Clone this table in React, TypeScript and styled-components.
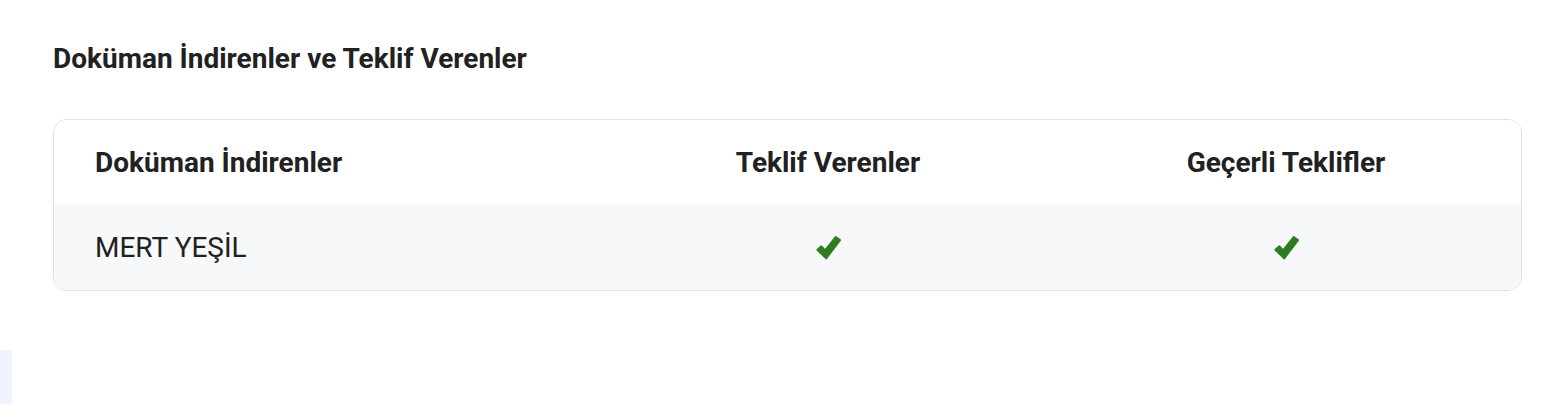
import React from "react";
import styled, { createGlobalStyle } from "styled-components";

const GlobalStyle = createGlobalStyle`
  html, body { margin: 0; padding: 0; background: #ffffff; }
  body { font-family: Roboto, "Noto Sans", Arial, sans-serif; color: #212121; }
`;

const Page = styled.div`
  position: relative;
  width: 1542px;
  height: 404px;
  box-sizing: border-box;
  padding: 41px 20px 0 53px;
`;

const Title = styled.h2`
  margin: 0;
  font-size: 28px;
  font-weight: 700;
  line-height: 36px;
  color: #212121;
`;

const Card = styled.div`
  margin-top: 42px;
  width: 1469px;
  box-sizing: border-box;
  border: 1px solid #dedfe1;
  border-radius: 14px;
  overflow: hidden;
`;

const Row = styled.div<{ $striped?: boolean }>`
  display: grid;
  grid-template-columns: 551px 446px 1fr;
  height: 85px;
  align-items: center;
  background: ${(p) => (p.$striped ? "#f7f8fa" : "#ffffff")};
`;

const Cell = styled.div<{ $center?: boolean; $head?: boolean }>`
  display: flex;
  justify-content: ${(p) => (p.$center ? "center" : "flex-start")};
  align-items: center;
  padding-left: ${(p) => (p.$center ? "0" : "41px")};
  font-size: 28px;
  font-weight: ${(p) => (p.$head ? 700 : 400)};
  color: #212121;
`;

const CheckIcon = styled.svg`
  width: 25px;
  height: 25px;
  display: block;
`;

const Check = () => (
  <CheckIcon viewBox="0 0 24 24" aria-label="✔">
    <path
      d="M1.4 14.2 L5.2 10.9 L8.7 14.8 L18.9 2 L23 4.9 L9.8 22.4 Z"
      fill="#2e7d1f"
      stroke="#2e7d1f"
      strokeWidth="2"
      strokeLinejoin="round"
    />
  </CheckIcon>
);

const SideTab = styled.div`
  position: absolute;
  left: 0;
  top: 350px;
  width: 12px;
  height: 54px;
  background: #eef3fd;
`;

export default function App() {
  return (
    <>
      <GlobalStyle />
      <Page>
        <Title>Doküman İndirenler ve Teklif Verenler</Title>
        <Card>
          <Row>
            <Cell $head>Doküman İndirenler</Cell>
            <Cell $head $center>Teklif Verenler</Cell>
            <Cell $head $center>Geçerli Teklifler</Cell>
          </Row>
          <Row $striped>
            <Cell>MERT YEŞİL</Cell>
            <Cell $center><Check /></Cell>
            <Cell $center><Check /></Cell>
          </Row>
        </Card>
        <SideTab />
      </Page>
    </>
  );
}
